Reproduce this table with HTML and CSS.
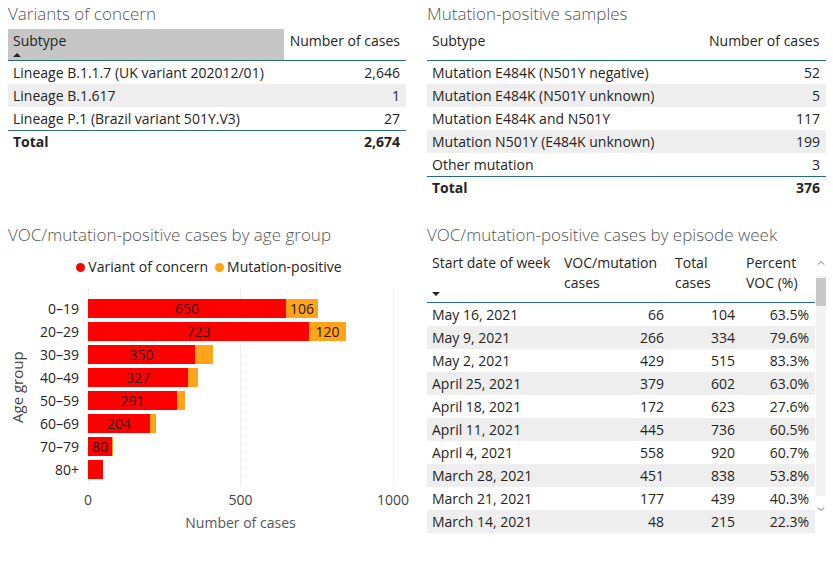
FILE: index.html
```html
<!DOCTYPE html>
<html>
<head>
<meta charset="utf-8">
<link rel="stylesheet" href="styles.css">
</head>
<body>
<div class="page">
  <section class="panel">
    <h2 class="title">Variants of concern</h2>
    <div class="tbl left">
      <div class="row head"><div class="c sorted">Subtype<span class="up"></span></div><div class="c num">Number of cases</div></div>
      <div class="row"><div class="c">Lineage B.1.1.7 (UK variant 202012/01)</div><div class="c num">2,646</div></div>
      <div class="row alt"><div class="c">Lineage B.1.617</div><div class="c num">1</div></div>
      <div class="row"><div class="c">Lineage P.1 (Brazil variant 501Y.V3)</div><div class="c num">27</div></div>
      <div class="row total"><div class="c">Total</div><div class="c num">2,674</div></div>
    </div>
  </section>

  <section class="panel">
    <h2 class="title">Mutation-positive samples</h2>
    <div class="tbl right">
      <div class="row head"><div class="c">Subtype</div><div class="c num hnum">Number of cases</div></div>
      <div class="row"><div class="c">Mutation E484K (N501Y negative)</div><div class="c num">52</div></div>
      <div class="row alt"><div class="c">Mutation E484K (N501Y unknown)</div><div class="c num">5</div></div>
      <div class="row"><div class="c">Mutation E484K and N501Y</div><div class="c num">117</div></div>
      <div class="row alt"><div class="c">Mutation N501Y (E484K unknown)</div><div class="c num">199</div></div>
      <div class="row"><div class="c">Other mutation</div><div class="c num">3</div></div>
      <div class="row total"><div class="c">Total</div><div class="c num">376</div></div>
    </div>
  </section>

  <section class="panel">
    <h2 class="title">VOC/mutation-positive cases by age group</h2>
    <div class="legend">
      <span class="lg"><span class="dot red-dot"></span>Variant of concern</span>
      <span class="lg"><span class="dot orange-dot"></span>Mutation-positive</span>
    </div>
    <div class="chart">
      <div class="ytitle">Age group</div>
      <div class="cats">
        <div class="cat">0–19</div>
        <div class="cat">20–29</div>
        <div class="cat">30–39</div>
        <div class="cat">40–49</div>
        <div class="cat">50–59</div>
        <div class="cat">60–69</div>
        <div class="cat">70–79</div>
        <div class="cat">80+</div>
      </div>
      <div class="plot">
        <span class="gl gl0"></span><span class="gl gl1"></span><span class="gl gl2"></span>
        <div class="bars">
          <div class="bar"><span class="seg red" style="width:198px">650</span><span class="seg orange" style="width:32px">106</span></div>
          <div class="bar"><span class="seg red" style="width:221px">723</span><span class="seg orange" style="width:37px">120</span></div>
          <div class="bar"><span class="seg red" style="width:107px">350</span><span class="seg orange" style="width:18px"></span></div>
          <div class="bar"><span class="seg red" style="width:100px">327</span><span class="seg orange" style="width:10px"></span></div>
          <div class="bar"><span class="seg red" style="width:89px">291</span><span class="seg orange" style="width:8px"></span></div>
          <div class="bar"><span class="seg red" style="width:62px">204</span><span class="seg orange" style="width:6px"></span></div>
          <div class="bar"><span class="seg red" style="width:24px">80</span><span class="seg orange" style="width:1px"></span></div>
          <div class="bar"><span class="seg red" style="width:15px"></span></div>
        </div>
      </div>
      <div class="xticks"><span>0</span><span>500</span><span>1000</span></div>
      <div class="xtitle">Number of cases</div>
    </div>
  </section>

  <section class="panel">
    <h2 class="title">VOC/mutation-positive cases by episode week</h2>
    <div class="wk">
      <div class="tbl week">
        <div class="row head"><div class="c hc"><span>Start date of week</span><span class="down"></span></div><div class="c">VOC/mutation cases</div><div class="c">Total cases</div><div class="c">Percent VOC (%)</div></div>
        <div class="row"><div class="c">May 16, 2021</div><div class="c num">66</div><div class="c num">104</div><div class="c num">63.5%</div></div>
        <div class="row alt"><div class="c">May 9, 2021</div><div class="c num">266</div><div class="c num">334</div><div class="c num">79.6%</div></div>
        <div class="row"><div class="c">May 2, 2021</div><div class="c num">429</div><div class="c num">515</div><div class="c num">83.3%</div></div>
        <div class="row alt"><div class="c">April 25, 2021</div><div class="c num">379</div><div class="c num">602</div><div class="c num">63.0%</div></div>
        <div class="row"><div class="c">April 18, 2021</div><div class="c num">172</div><div class="c num">623</div><div class="c num">27.6%</div></div>
        <div class="row alt"><div class="c">April 11, 2021</div><div class="c num">445</div><div class="c num">736</div><div class="c num">60.5%</div></div>
        <div class="row"><div class="c">April 4, 2021</div><div class="c num">558</div><div class="c num">920</div><div class="c num">60.7%</div></div>
        <div class="row alt"><div class="c">March 28, 2021</div><div class="c num">451</div><div class="c num">838</div><div class="c num">53.8%</div></div>
        <div class="row"><div class="c">March 21, 2021</div><div class="c num">177</div><div class="c num">439</div><div class="c num">40.3%</div></div>
        <div class="row alt"><div class="c">March 14, 2021</div><div class="c num">48</div><div class="c num">215</div><div class="c num">22.3%</div></div>
      </div>
      <div class="sb">
        <div class="sb-btn"><svg width="8" height="6" viewBox="0 0 8 6"><path d="M1 4.5 L4 1.5 L7 4.5" fill="none" stroke="#666" stroke-width="1"/></svg></div>
        <div class="sb-track"><div class="sb-thumb"></div></div>
        <div class="sb-btn"><svg width="8" height="6" viewBox="0 0 8 6"><path d="M1 1.5 L4 4.5 L7 1.5" fill="none" stroke="#666" stroke-width="1"/></svg></div>
      </div>
    </div>
  </section>
</div>
</body>
</html>
```

FILE: styles.css
```css
* { box-sizing: border-box; }
body {
  margin: 0;
  width: 833px;
  height: 564px;
  overflow: hidden;
  background: #fff;
  font-family: "Open Sans", "Noto Sans", sans-serif;
  font-size: 14px;
  color: #252423;
}
.page {
  display: grid;
  grid-template-columns: 398px 399px;
  grid-template-rows: 221px 343px;
  column-gap: 21px;
  padding-left: 8px;
}
.title {
  margin: 0;
  padding-top: 3px;
  height: 25px;
  font-size: 17px;
  font-weight: 300;
  line-height: 22px;
  color: #555;
  white-space: nowrap;
}
.tbl { margin-top: 4px; }
.row {
  display: grid;
  height: 23px;
  line-height: 23px;
}
.left .row { grid-template-columns: 276px 122px; }
.right .row { grid-template-columns: 277px 122px; }
.row.alt { background: #efeeef; }
.c {
  padding: 0 6px 0 5px;
  white-space: nowrap;
  overflow: hidden;
}
.num { text-align: right; }
.row.head {
  height: 32px;
  line-height: 18px;
  border-bottom: 1px solid #23706e;
}
.head .c { padding-top: 3px; }
.head .hnum { padding-right: 9px; }
.sorted { background: #c6c6c6; }
.up {
  display: block;
  width: 0;
  height: 0;
  margin-top: 3px;
  border-left: 4px solid transparent;
  border-right: 4px solid transparent;
  border-bottom: 4px solid #252423;
}
.down {
  display: block;
  width: 0;
  height: 0;
  border-left: 4px solid transparent;
  border-right: 4px solid transparent;
  border-top: 4px solid #252423;
}
.row.total {
  font-weight: 700;
  border-top: 1px solid #23706e;
  line-height: 22px;
}

/* chart */
.legend {
  display: flex;
  justify-content: center;
  gap: 7px;
  margin-top: 11px;
  height: 20px;
  line-height: 20px;
  font-size: 14px;
  padding-left: 4px;
}
.lg { display: flex; align-items: center; }
.dot {
  width: 9px;
  height: 9px;
  border-radius: 50%;
  margin-right: 3px;
}
.red-dot { background: #ff0000; }
.orange-dot { background: #ffa31a; }
.chart {
  margin-top: 12px;
  display: grid;
  grid-template-columns: 18px 62px 318px;
  grid-template-rows: 196px 22px 24px;
}
.ytitle {
  grid-row: 1;
  grid-column: 1;
  writing-mode: vertical-rl;
  transform: rotate(180deg);
  text-align: center;
  font-size: 15px;
  color: #444;
  line-height: 18px;
}
.cats {
  grid-row: 1;
  grid-column: 2;
  padding-top: 10px;
  padding-right: 9px;
  text-align: right;
  font-size: 14px;
}
.cat { height: 23px; line-height: 19px; }
.plot {
  grid-row: 1;
  grid-column: 3;
  position: relative;
  width: 305px;
}
.gl {
  position: absolute;
  top: 0;
  bottom: 0;
  border-left: 1px dotted #e2e2e2;
}
.gl0 { left: 0; }
.gl1 { left: 152px; }
.gl2 { left: 305px; }
.bars {
  position: relative;
  padding-top: 10px;
}
.bar {
  display: flex;
  height: 19px;
  margin-bottom: 4px;
}
.seg {
  display: flex;
  align-items: center;
  justify-content: center;
  font-size: 14px;
  color: #2a1a1a;
  overflow: visible;
  white-space: nowrap;
}
.red { background: #ff0000; }
.orange { background: #ffa31a; }
.xticks {
  grid-row: 2;
  grid-column: 3;
  display: flex;
  justify-content: space-between;
  width: 365px;
  margin-left: -30px;
  font-size: 14px;
  color: #444;
  line-height: 22px;
  padding-top: 4px;
}
.xticks span { width: 60px; text-align: center; }
.xtitle {
  grid-row: 3;
  grid-column: 3;
  width: 305px;
  text-align: center;
  font-size: 14px;
  color: #555;
  line-height: 24px;
  padding-top: 4px;
}

/* week table */
.wk {
  display: grid;
  grid-template-columns: 388px 11px;
  margin-top: 4px;
}
.week { margin-top: 0; }
.week .row { grid-template-columns: 132px 111px 71px 74px; }
.week .row.head {
  height: 53px;
  line-height: 20px;
}
.week .head .c { padding-top: 3px; white-space: normal; }
.hc {
  display: flex;
  flex-direction: column;
  justify-content: space-between;
  padding-bottom: 6px;
}
.sb {
  margin-left: 1px;
  width: 10px;
  height: 272px;
  display: flex;
  flex-direction: column;
}
.sb-btn {
  height: 26px;
  display: flex;
  align-items: center;
  justify-content: center;
}
.sb-track {
  flex: 1;
  background: #f3f3f3;
}
.sb-thumb {
  height: 28px;
  margin-top: 2px;
  background: #c8c8c8;
}
```
